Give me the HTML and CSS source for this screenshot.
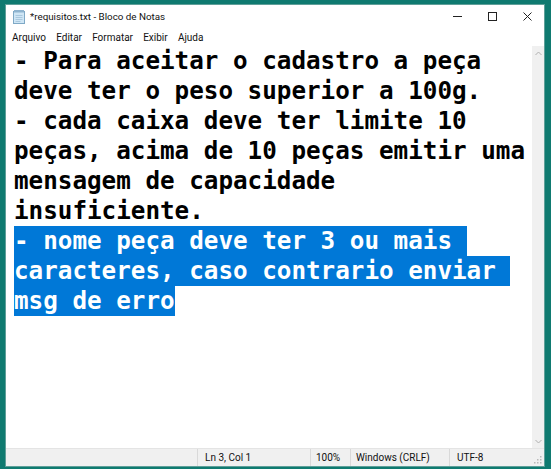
FILE: index.html
```html
<!DOCTYPE html>
<html lang="pt-BR">
<head>
<meta charset="utf-8">
<title>*requisitos.txt - Bloco de Notas</title>
<link rel="stylesheet" href="styles.css">
</head>
<body>
<div class="window">
  <div class="titlebar">
    <svg class="app-icon" width="12" height="14" viewBox="0 0 12 14">
      <rect x="0.5" y="1.5" width="11" height="12" fill="#cfe6f5" stroke="#7fa9c6"/>
      <rect x="1" y="0" width="10" height="2.5" fill="#8fb4cf"/>
      <path d="M2.5 5.5h7M2.5 7.5h7M2.5 9.5h7M2.5 11.5h5" stroke="#a9c8de" stroke-width="1"/>
    </svg>
    <span class="title">*requisitos.txt - Bloco de Notas</span>
    <div class="controls">
      <div class="ctl">
        <svg width="9" height="9" viewBox="0 0 9 9"><path d="M0 4.5h9" stroke="#222" stroke-width="1"/></svg>
      </div>
      <div class="ctl">
        <svg width="9" height="9" viewBox="0 0 9 9"><rect x="0.5" y="0.5" width="8" height="8" fill="none" stroke="#222" stroke-width="1"/></svg>
      </div>
      <div class="ctl ctl-close">
        <svg width="9" height="9" viewBox="0 0 9 9"><path d="M0.5 0.5l8 8M8.5 0.5l-8 8" stroke="#222" stroke-width="1"/></svg>
      </div>
    </div>
  </div>
  <div class="menubar">
    <span class="menu">Arquivo</span>
    <span class="menu">Editar</span>
    <span class="menu">Formatar</span>
    <span class="menu">Exibir</span>
    <span class="menu">Ajuda</span>
  </div>
  <div class="body">
    <div class="editor">
      <div class="line">- Para aceitar o cadastro a peça</div>
      <div class="line">deve ter o peso superior a 100g.</div>
      <div class="line">- cada caixa deve ter limite 10</div>
      <div class="line">peças, acima de 10 peças emitir uma</div>
      <div class="line">mensagem de capacidade</div>
      <div class="line">insuficiente.</div>
      <div class="line"><span class="sel">- nome peça deve ter 3 ou mais </span></div>
      <div class="line"><span class="sel">caracteres, caso contrario enviar </span></div>
      <div class="line"><span class="sel">msg de erro</span></div>
    </div>
    <div class="scrollbar">
      <svg class="arrow" width="7" height="5" viewBox="0 0 7 5"><path d="M0.5 4L3.5 1l3 3" fill="none" stroke="#b0b0b0" stroke-width="1"/></svg>
      <svg class="arrow" width="7" height="5" viewBox="0 0 7 5"><path d="M0.5 1l3 3 3-3" fill="none" stroke="#b0b0b0" stroke-width="1"/></svg>
    </div>
  </div>
  <div class="statusbar">
    <div class="sb-fill"></div>
    <div class="sb-cell sb-pos">Ln 3, Col 1</div>
    <div class="sb-cell sb-zoom">100%</div>
    <div class="sb-cell sb-eol">Windows (CRLF)</div>
    <div class="sb-cell sb-enc">UTF-8</div>
    <div class="grip">
      <svg width="8" height="8" viewBox="0 0 8 8">
        <rect x="6" y="0" width="1.5" height="1.5" fill="#b8b8b8"/>
        <rect x="3" y="3" width="1.5" height="1.5" fill="#b8b8b8"/>
        <rect x="6" y="3" width="1.5" height="1.5" fill="#b8b8b8"/>
        <rect x="0" y="6" width="1.5" height="1.5" fill="#b8b8b8"/>
        <rect x="3" y="6" width="1.5" height="1.5" fill="#b8b8b8"/>
        <rect x="6" y="6" width="1.5" height="1.5" fill="#b8b8b8"/>
      </svg>
    </div>
  </div>
</div>
</body>
</html>
```
FILE: styles.css
```css
html, body {
  margin: 0;
  padding: 0;
}
body {
  width: 551px;
  height: 469px;
  box-sizing: border-box;
  padding: 4px 6px 2px 5px;
  background: #0f7a70;
  overflow: hidden;
  font-family: Roboto, "Noto Sans", sans-serif;
}
.window {
  box-sizing: border-box;
  width: 540px;
  height: 463px;
  border: 1px solid #5f9f99;
  background: #fff;
  display: flex;
  flex-direction: column;
}
.titlebar {
  height: 23px;
  display: flex;
  align-items: center;
  flex: none;
}
.app-icon {
  margin-left: 7px;
  margin-right: 5px;
  flex: none;
}
.title {
  font-size: 9.8px;
  color: #111;
  white-space: nowrap;
}
.controls {
  margin-left: auto;
  display: flex;
  height: 100%;
}
.ctl {
  width: 35px;
  display: flex;
  align-items: center;
  justify-content: center;
}
.ctl-close {
  width: 34px;
}
.menubar {
  height: 18px;
  flex: none;
  display: flex;
  align-items: center;
  padding-left: 1px;
}
.menu {
  font-size: 10px;
  color: #111;
  padding: 0 5.1px;
}
.body {
  flex: 1;
  display: flex;
  min-height: 0;
}
.editor {
  flex: 1;
  padding-left: 8px;
  font-family: "DejaVu Sans Mono", "Liberation Mono", monospace;
  font-weight: bold;
  font-size: 24.25px;
  line-height: 30px;
  color: #000;
  overflow: hidden;
}
.line {
  height: 30px;
  white-space: pre;
}
.sel {
  display: inline-block;
  height: 30px;
  background: #0078d7;
  color: #fff;
  vertical-align: top;
}
.scrollbar {
  width: 12px;
  flex: none;
  background: #f0f0f0;
  display: flex;
  flex-direction: column;
  justify-content: space-between;
  align-items: center;
  padding: 5px 0 4px;
  box-sizing: border-box;
}
.statusbar {
  height: 18px;
  flex: none;
  display: flex;
  align-items: stretch;
  background: #f0f0f0;
  border-top: 1px solid #e4e4e4;
  box-sizing: border-box;
  font-size: 10px;
  color: #111;
}
.sb-fill {
  flex: 1;
}
.sb-cell {
  border-left: 1px solid #d9d9d9;
  display: flex;
  align-items: center;
  padding-left: 7px;
  box-sizing: border-box;
  white-space: nowrap;
}
.sb-pos { width: 113px; }
.sb-zoom { width: 40px; padding-left: 5px; }
.sb-eol { width: 99px; padding-left: 5px; }
.sb-enc { width: 81px; }
.grip {
  width: 14px;
  display: flex;
  align-items: flex-end;
  justify-content: flex-end;
  padding: 0 2px 2px 0;
  box-sizing: border-box;
}
```
